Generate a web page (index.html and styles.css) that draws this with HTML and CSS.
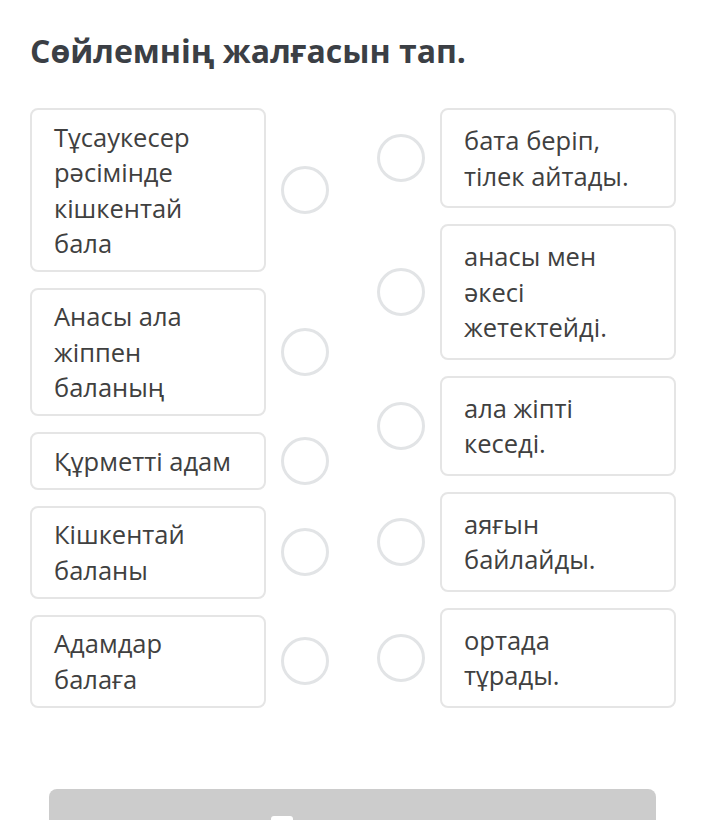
FILE: index.html
```html
<!DOCTYPE html>
<html lang="kk">
<head>
<meta charset="utf-8">
<title>Сөйлемнің жалғасын тап.</title>
<link rel="stylesheet" href="styles.css">
</head>
<body>
<main class="page">
  <h1 class="title">Сөйлемнің жалғасын тап.</h1>
  <div class="board">
    <div class="col col-left">
      <div class="row"><div class="card">Тұсаукесер<br>рәсімінде<br>кішкентай<br>бала</div><span class="dot"></span></div>
      <div class="row"><div class="card">Анасы ала<br>жіппен<br>баланың</div><span class="dot"></span></div>
      <div class="row"><div class="card">Құрметті адам</div><span class="dot"></span></div>
      <div class="row"><div class="card">Кішкентай<br>баланы</div><span class="dot"></span></div>
      <div class="row"><div class="card">Адамдар<br>балаға</div><span class="dot"></span></div>
    </div>
    <div class="col col-right">
      <div class="row"><span class="dot"></span><div class="card card-r">бата беріп,<br>тілек айтады.</div></div>
      <div class="row"><span class="dot"></span><div class="card card-r">анасы мен<br>әкесі<br>жетектейді.</div></div>
      <div class="row"><span class="dot"></span><div class="card card-r">ала жіпті<br>кеседі.</div></div>
      <div class="row"><span class="dot"></span><div class="card card-r">аяғын<br>байлайды.</div></div>
      <div class="row"><span class="dot"></span><div class="card card-r">ортада<br>тұрады.</div></div>
    </div>
  </div>
  <button class="submit" type="button"><span class="submit-icon"></span><span class="submit-text">Жауабын жіберу</span></button>
</main>
</body>
</html>
```
FILE: styles.css
```css
html, body {
  margin: 0;
  padding: 0;
  background: #ffffff;
}
body {
  font-family: "Open Sans", "Noto Sans", sans-serif;
  color: #404040;
}
.page {
  padding: 30px 30px 0 30px;
}
.title {
  margin: 0;
  font-size: 32px;
  line-height: 42px;
  font-weight: 700;
  color: #3b3f45;
  letter-spacing: 0;
}
.board {
  display: flex;
  gap: 48px;
  margin-top: 36px;
  align-items: flex-start;
}
.col {
  display: flex;
  flex-direction: column;
}
.col-left {
  gap: 15.9px;
}
.col-right {
  gap: 16px;
}
.row {
  display: flex;
  align-items: center;
  gap: 15px;
}
.card {
  box-sizing: border-box;
  width: 236px;
  border: 2px solid #e5e5e5;
  border-radius: 8px;
  padding: 9.5px 20px 8.5px 22px;
  font-size: 25.5px;
  line-height: 35.5px;
  color: #404040;
  white-space: nowrap;
}
.card-r {
  padding: 13px 20px 12px 22px;
}
.dot {
  box-sizing: border-box;
  width: 48px;
  height: 48px;
  border: 3px solid #e2e4e6;
  border-radius: 50%;
  flex: none;
}
.submit {
  display: flex;
  justify-content: center;
  align-items: flex-start;
  gap: 8px;
  box-sizing: border-box;
  width: 607px;
  height: 70px;
  margin: 81px 0 0 19px;
  padding: 27px 0 0 0;
  border: none;
  border-radius: 8px;
  background: #cccccc;
  color: #ffffff;
  font-family: "Open Sans", "Noto Sans", sans-serif;
  font-weight: 600;
}
.submit-text {
  font-size: 16px;
  line-height: 22px;
  margin-top: 2px;
}
.submit-icon {
  width: 22px;
  height: 24px;
  background: #ffffff;
  border-radius: 3px;
}
```
